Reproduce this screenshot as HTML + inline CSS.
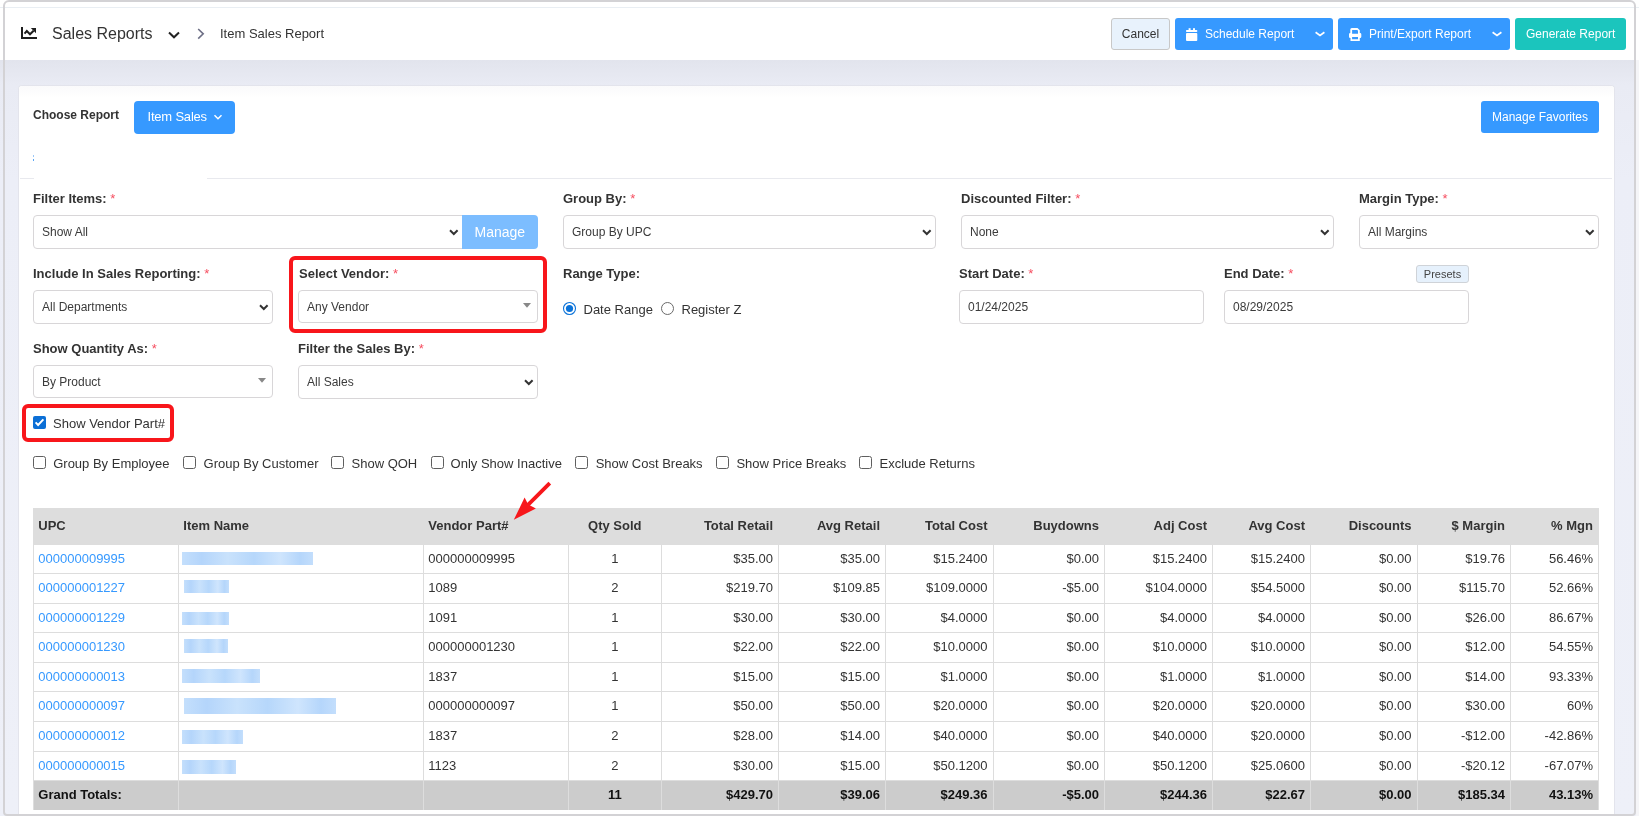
<!DOCTYPE html><html><head><meta charset="utf-8"><title>Item Sales Report</title><style>
*{margin:0;padding:0;box-sizing:border-box}
html,body{width:1639px;height:816px;overflow:hidden;background:#fff;font-family:"Liberation Sans",sans-serif;}
.t{position:absolute;white-space:nowrap;line-height:1;}
svg{position:absolute;overflow:visible}
</style></head><body><div id="root" style="position:absolute;left:0;top:0;width:1639px;height:816px;overflow:hidden;will-change:transform">
<div style="position:absolute;left:0px;top:60px;width:1639px;height:756px;background:linear-gradient(#e2e4ed 0px,#e9ebf4 25px,#eceef7 120px,#eef0f8 100%);"></div>
<div style="position:absolute;left:0px;top:0px;width:1639px;height:60px;background:#fff;"></div>
<div style="position:absolute;left:0px;top:7px;width:1639px;height:1px;background:#e9eef3;"></div>
<svg style="left:21px;top:27px" width="16" height="12" viewBox="0 0 16 12"><path d="M1 0V11H16" fill="none" stroke="#1e1e1e" stroke-width="2"/><path d="M3.5 6.6L5.8 4 9 7.3 12.6 3.7" fill="none" stroke="#1e1e1e" stroke-width="2"/><path d="M9.8 1.1H15V6.3Z" fill="#1e1e1e"/></svg>
<div class="t" style="left:52px;top:26px;font-size:16px;color:#333;">Sales Reports</div>
<svg style="left:168px;top:31px" width="12" height="8" viewBox="0 0 12 8"><path d="M1 1.5L6 6.3 11 1.5" fill="none" stroke="#222" stroke-width="2"/></svg>
<svg style="left:197px;top:28px" width="8" height="12" viewBox="0 0 8 12"><path d="M1.2 1L6.2 5.8 1.2 10.6" fill="none" stroke="#6e7086" stroke-width="1.6"/></svg>
<div class="t" style="left:220px;top:27px;font-size:13px;color:#333;">Item Sales Report</div>
<div style="position:absolute;left:1111px;top:18px;width:59px;height:32px;background:#e8f2fc;border:1px solid #c8c8c8;border-radius:3px;"></div>
<div class="t" style="left:940.5px;width:400px;top:28px;font-size:12px;color:#333;text-align:center;">Cancel</div>
<div style="position:absolute;left:1175px;top:18px;width:158px;height:32px;background:#3699ff;border-radius:3px;"></div>
<svg style="left:1186px;top:27px" width="12" height="14" viewBox="0 0 12 14"><rect x="2.6" y="1.2" width="2" height="2.5" fill="#fff"/><rect x="7" y="1.2" width="2" height="2.5" fill="#fff"/><rect x="0" y="3" width="11.3" height="2" rx="0.8" fill="#fff"/><rect x="0" y="6" width="11.3" height="8" rx="1" fill="#fff"/></svg>
<div class="t" style="left:1205px;top:28px;font-size:12px;color:#fff;">Schedule Report</div>
<svg style="left:1315px;top:30px" width="10" height="7" viewBox="0 0 10 7"><path d="M0.6 2.3L5 5.4 9.4 2.3" fill="none" stroke="#fff" stroke-width="1.7"/></svg>
<div style="position:absolute;left:1338px;top:18px;width:172px;height:32px;background:#3699ff;border-radius:3px;"></div>
<svg style="left:1349px;top:28px" width="13" height="13" viewBox="0 0 13 13"><path fill-rule="evenodd" fill="#fff" d="M1.3 5V1.5Q1.3 0 2.8 0H8.5L10.8 2.3V5H11.1Q12.3 5 12.3 6.2V8.8Q12.3 10 11.1 10H10.8V13H1.5V10H1.2Q0 10 0 8.8V6.2Q0 5 1.2 5ZM3.1 2H8.2L9 2.8V5.8H3.1ZM3.1 9H9V11.3H3.1Z"/></svg>
<div class="t" style="left:1369px;top:28px;font-size:12px;color:#fff;">Print/Export Report</div>
<svg style="left:1492px;top:30px" width="10" height="7" viewBox="0 0 10 7"><path d="M0.6 2.3L5 5.4 9.4 2.3" fill="none" stroke="#fff" stroke-width="1.7"/></svg>
<div style="position:absolute;left:1515px;top:18px;width:111px;height:32px;background:#1bc5bd;border-radius:3px;"></div>
<div class="t" style="left:1526px;top:28px;font-size:12px;color:#fff;">Generate Report</div>
<div style="position:absolute;left:18px;top:85px;width:1597px;height:740px;background:#fff;border:1px solid #e3e4ec;border-bottom:0;border-radius:4px 4px 0 0;"></div>
<div style="position:absolute;left:19px;top:86px;width:1595px;height:12px;background:linear-gradient(#fafafb,#fff);border-radius:3px 3px 0 0;"></div>
<div class="t" style="left:33px;top:109px;font-size:12px;font-weight:bold;color:#333;">Choose Report</div>
<div style="position:absolute;left:134px;top:101px;width:101px;height:33px;background:#3699ff;border-radius:4px;"></div>
<div class="t" style="left:147.5px;top:110px;font-size:13px;color:#fff;letter-spacing:-0.2px;">Item Sales</div>
<svg style="left:213px;top:114px" width="10" height="7" viewBox="0 0 10 7"><path d="M1.5 1.3L5 4.8 8.5 1.3" fill="none" stroke="#fff" stroke-width="1.5"/></svg>
<div style="position:absolute;left:1481px;top:101px;width:118px;height:32px;background:#3699ff;border-radius:3px;"></div>
<div class="t" style="left:1492px;top:111px;font-size:12px;color:#fff;">Manage Favorites</div>
<div style="position:absolute;left:20px;top:178px;width:14px;height:1px;background:#e8e9ee;"></div>
<div style="position:absolute;left:207px;top:178px;width:1405px;height:1px;background:#e8e9ee;"></div>
<div style="position:absolute;left:33px;top:155px;width:1px;height:2px;background:#9cc8f7;"></div>
<div style="position:absolute;left:33px;top:159px;width:1px;height:2px;background:#5aa6f5;"></div>
<div class="t" style="left:33px;top:192px;font-size:13px;font-weight:bold;color:#333;">Filter Items: <span style="color:#f64e60;font-weight:normal">*</span></div>
<div style="position:absolute;left:33px;top:215px;width:430px;height:34px;background:#fff;border:1px solid #d8d6d8;border-radius:4px 0 0 4px;"></div>
<div class="t" style="left:42px;top:226px;font-size:12px;color:#3b3b3b;">Show All</div>
<svg style="left:449px;top:229px" width="10" height="7" viewBox="0 0 10 7"><path d="M1 1.2L4.8 5 8.6 1.2" fill="none" stroke="#333" stroke-width="2"/></svg>
<div style="position:absolute;left:462px;top:215px;width:76px;height:34px;background:#7cbdff;border-radius:0 4px 4px 0;"></div>
<div class="t" style="left:474.5px;top:225px;font-size:14px;color:#fff;">Manage</div>
<div class="t" style="left:563px;top:192px;font-size:13px;font-weight:bold;color:#333;">Group By: <span style="color:#f64e60;font-weight:normal">*</span></div>
<div style="position:absolute;left:563px;top:215px;width:373px;height:34px;background:#fff;border:1px solid #d8d6d8;border-radius:4px;"></div>
<div class="t" style="left:572px;top:226px;font-size:12px;color:#3b3b3b;">Group By UPC</div>
<svg style="left:922px;top:229px" width="10" height="7" viewBox="0 0 10 7"><path d="M1 1.2L4.8 5 8.6 1.2" fill="none" stroke="#333" stroke-width="2"/></svg>
<div class="t" style="left:961px;top:192px;font-size:13px;font-weight:bold;color:#333;">Discounted Filter: <span style="color:#f64e60;font-weight:normal">*</span></div>
<div style="position:absolute;left:961px;top:215px;width:373px;height:34px;background:#fff;border:1px solid #d8d6d8;border-radius:4px;"></div>
<div class="t" style="left:970px;top:226px;font-size:12px;color:#3b3b3b;">None</div>
<svg style="left:1320px;top:229px" width="10" height="7" viewBox="0 0 10 7"><path d="M1 1.2L4.8 5 8.6 1.2" fill="none" stroke="#333" stroke-width="2"/></svg>
<div class="t" style="left:1359px;top:192px;font-size:13px;font-weight:bold;color:#333;">Margin Type: <span style="color:#f64e60;font-weight:normal">*</span></div>
<div style="position:absolute;left:1359px;top:215px;width:240px;height:34px;background:#fff;border:1px solid #d8d6d8;border-radius:4px;"></div>
<div class="t" style="left:1368px;top:226px;font-size:12px;color:#3b3b3b;">All Margins</div>
<svg style="left:1585px;top:229px" width="10" height="7" viewBox="0 0 10 7"><path d="M1 1.2L4.8 5 8.6 1.2" fill="none" stroke="#333" stroke-width="2"/></svg>
<div class="t" style="left:33px;top:267px;font-size:13px;font-weight:bold;color:#333;">Include In Sales Reporting: <span style="color:#f64e60;font-weight:normal">*</span></div>
<div style="position:absolute;left:33px;top:290px;width:240px;height:34px;background:#fff;border:1px solid #d8d6d8;border-radius:4px;"></div>
<div class="t" style="left:42px;top:301px;font-size:12px;color:#3b3b3b;">All Departments</div>
<svg style="left:259px;top:304px" width="10" height="7" viewBox="0 0 10 7"><path d="M1 1.2L4.8 5 8.6 1.2" fill="none" stroke="#333" stroke-width="2"/></svg>
<div class="t" style="left:299px;top:267px;font-size:13px;font-weight:bold;color:#333;">Select Vendor: <span style="color:#f64e60;font-weight:normal">*</span></div>
<div style="position:absolute;left:298px;top:290px;width:240px;height:33px;background:#fff;border:1px solid #d8d6d8;border-radius:4px;"></div>
<div class="t" style="left:307px;top:301px;font-size:12px;color:#3b3b3b;">Any Vendor</div>
<svg style="left:523px;top:302.5px" width="8" height="5" viewBox="0 0 8 5"><path d="M0 0H8L4 4.7Z" fill="#888"/></svg>
<div style="position:absolute;left:289px;top:256px;width:258px;height:77px;border:4px solid #f8161b;border-radius:6px;"></div>
<div class="t" style="left:563px;top:267px;font-size:13px;font-weight:bold;color:#333;">Range Type:</div>
<svg style="left:563px;top:302px" width="14" height="14" viewBox="0 0 14 14"><circle cx="6.5" cy="6.5" r="6" fill="#fff" stroke="#0b73d9" stroke-width="1.1"/><circle cx="6.5" cy="6.5" r="3.6" fill="#0b73d9"/></svg>
<div class="t" style="left:583.5px;top:303px;font-size:13px;color:#333;">Date Range</div>
<svg style="left:660.5px;top:302px" width="14" height="14" viewBox="0 0 14 14"><circle cx="6.5" cy="6.5" r="6" fill="#fff" stroke="#6a6a6a" stroke-width="1"/></svg>
<div class="t" style="left:681.5px;top:303px;font-size:13px;color:#333;">Register Z</div>
<div class="t" style="left:959px;top:267px;font-size:13px;font-weight:bold;color:#333;">Start Date: <span style="color:#f64e60;font-weight:normal">*</span></div>
<div style="position:absolute;left:959px;top:290px;width:245px;height:34px;background:#fff;border:1px solid #d8d6d8;border-radius:4px;"></div>
<div class="t" style="left:968px;top:301px;font-size:12px;color:#3b3b3b;">01/24/2025</div>
<div class="t" style="left:1224px;top:267px;font-size:13px;font-weight:bold;color:#333;">End Date: <span style="color:#f64e60;font-weight:normal">*</span></div>
<div style="position:absolute;left:1224px;top:290px;width:245px;height:34px;background:#fff;border:1px solid #d8d6d8;border-radius:4px;"></div>
<div class="t" style="left:1233px;top:301px;font-size:12px;color:#3b3b3b;">08/29/2025</div>
<div style="position:absolute;left:1416px;top:265px;width:53px;height:18px;background:#e6f1fc;border:1px solid #cfd3d8;border-radius:3px;"></div>
<div class="t" style="left:1242.5px;width:400px;top:269px;font-size:11px;color:#444;text-align:center;">Presets</div>
<div class="t" style="left:33px;top:342px;font-size:13px;font-weight:bold;color:#333;">Show Quantity As: <span style="color:#f64e60;font-weight:normal">*</span></div>
<div style="position:absolute;left:33px;top:365px;width:240px;height:33px;background:#fff;border:1px solid #d8d6d8;border-radius:4px;"></div>
<div class="t" style="left:42px;top:376px;font-size:12px;color:#3b3b3b;">By Product</div>
<svg style="left:258px;top:377.5px" width="8" height="5" viewBox="0 0 8 5"><path d="M0 0H8L4 4.7Z" fill="#888"/></svg>
<div class="t" style="left:298px;top:342px;font-size:13px;font-weight:bold;color:#333;">Filter the Sales By: <span style="color:#f64e60;font-weight:normal">*</span></div>
<div style="position:absolute;left:298px;top:365px;width:240px;height:34px;background:#fff;border:1px solid #d8d6d8;border-radius:4px;"></div>
<div class="t" style="left:307px;top:376px;font-size:12px;color:#3b3b3b;">All Sales</div>
<svg style="left:524px;top:379px" width="10" height="7" viewBox="0 0 10 7"><path d="M1 1.2L4.8 5 8.6 1.2" fill="none" stroke="#333" stroke-width="2"/></svg>
<div style="position:absolute;left:22px;top:404px;width:152px;height:38px;border:4px solid #f8161b;border-radius:6px;"></div>
<svg style="left:33px;top:416px" width="13" height="13" viewBox="0 0 13 13"><rect x="0" y="0" width="13" height="13" rx="2" fill="#0b6fd6"/><path d="M2.6 6.4L5.1 9 10.4 3.3" fill="none" stroke="#fff" stroke-width="1.9"/></svg>
<div class="t" style="left:53px;top:417px;font-size:13px;color:#333;">Show Vendor Part#</div>
<svg style="left:33px;top:456px" width="13" height="13" viewBox="0 0 13 13"><rect x="0.5" y="0.5" width="12" height="12" rx="2" fill="#fff" stroke="#5f5f5f" stroke-width="1"/></svg>
<div class="t" style="left:53.2px;top:457px;font-size:13px;color:#333;">Group By Employee</div>
<svg style="left:183px;top:456px" width="13" height="13" viewBox="0 0 13 13"><rect x="0.5" y="0.5" width="12" height="12" rx="2" fill="#fff" stroke="#5f5f5f" stroke-width="1"/></svg>
<div class="t" style="left:203.6px;top:457px;font-size:13px;color:#333;">Group By Customer</div>
<svg style="left:331px;top:456px" width="13" height="13" viewBox="0 0 13 13"><rect x="0.5" y="0.5" width="12" height="12" rx="2" fill="#fff" stroke="#5f5f5f" stroke-width="1"/></svg>
<div class="t" style="left:351.5px;top:457px;font-size:13px;color:#333;">Show QOH</div>
<svg style="left:431px;top:456px" width="13" height="13" viewBox="0 0 13 13"><rect x="0.5" y="0.5" width="12" height="12" rx="2" fill="#fff" stroke="#5f5f5f" stroke-width="1"/></svg>
<div class="t" style="left:450.6px;top:457px;font-size:13px;color:#333;">Only Show Inactive</div>
<svg style="left:575px;top:456px" width="13" height="13" viewBox="0 0 13 13"><rect x="0.5" y="0.5" width="12" height="12" rx="2" fill="#fff" stroke="#5f5f5f" stroke-width="1"/></svg>
<div class="t" style="left:595.7px;top:457px;font-size:13px;color:#333;">Show Cost Breaks</div>
<svg style="left:716px;top:456px" width="13" height="13" viewBox="0 0 13 13"><rect x="0.5" y="0.5" width="12" height="12" rx="2" fill="#fff" stroke="#5f5f5f" stroke-width="1"/></svg>
<div class="t" style="left:736.4px;top:457px;font-size:13px;color:#333;">Show Price Breaks</div>
<svg style="left:859px;top:456px" width="13" height="13" viewBox="0 0 13 13"><rect x="0.5" y="0.5" width="12" height="12" rx="2" fill="#fff" stroke="#5f5f5f" stroke-width="1"/></svg>
<div class="t" style="left:879.5px;top:457px;font-size:13px;color:#333;">Exclude Returns</div>
<svg style="left:500px;top:475px;z-index:5" width="60" height="50" viewBox="0 0 60 50"><path d="M49.8 8.2L27 30.8" stroke="#f7171b" stroke-width="3.8" fill="none"/><path d="M13.8 44.8L24.6 22.6 28.2 29.6 35.9 33.4Z" fill="#f7171b"/></svg>
<div style="position:absolute;left:33px;top:508px;width:1566px;height:37px;background:#dddddd;"></div>
<div class="t" style="left:38.3px;top:519px;font-size:13px;font-weight:bold;color:#333;">UPC</div>
<div class="t" style="left:183.3px;top:519px;font-size:13px;font-weight:bold;color:#333;">Item Name</div>
<div class="t" style="left:428.3px;top:519px;font-size:13px;font-weight:bold;color:#333;">Vendor Part#</div>
<div class="t" style="left:414.75px;width:400px;top:519px;font-size:13px;font-weight:bold;color:#333;text-align:center;">Qty Sold</div>
<div class="t" style="right:866.0px;top:519px;font-size:13px;font-weight:bold;color:#333;text-align:right;">Total Retail</div>
<div class="t" style="right:759.0px;top:519px;font-size:13px;font-weight:bold;color:#333;text-align:right;">Avg Retail</div>
<div class="t" style="right:651.5px;top:519px;font-size:13px;font-weight:bold;color:#333;text-align:right;">Total Cost</div>
<div class="t" style="right:540.0px;top:519px;font-size:13px;font-weight:bold;color:#333;text-align:right;">Buydowns</div>
<div class="t" style="right:432.0px;top:519px;font-size:13px;font-weight:bold;color:#333;text-align:right;">Adj Cost</div>
<div class="t" style="right:334.0px;top:519px;font-size:13px;font-weight:bold;color:#333;text-align:right;">Avg Cost</div>
<div class="t" style="right:227.5px;top:519px;font-size:13px;font-weight:bold;color:#333;text-align:right;">Discounts</div>
<div class="t" style="right:134.0px;top:519px;font-size:13px;font-weight:bold;color:#333;text-align:right;">$ Margin</div>
<div class="t" style="right:46.0px;top:519px;font-size:13px;font-weight:bold;color:#333;text-align:right;">% Mgn</div>
<div style="position:absolute;left:33px;top:780px;width:1566px;height:30px;background:#cccccc;"></div>
<div style="position:absolute;left:33px;top:573px;width:1566px;height:1px;background:#dddddd;"></div>
<div style="position:absolute;left:33px;top:603px;width:1566px;height:1px;background:#dddddd;"></div>
<div style="position:absolute;left:33px;top:632px;width:1566px;height:1px;background:#dddddd;"></div>
<div style="position:absolute;left:33px;top:662px;width:1566px;height:1px;background:#dddddd;"></div>
<div style="position:absolute;left:33px;top:691px;width:1566px;height:1px;background:#dddddd;"></div>
<div style="position:absolute;left:33px;top:721px;width:1566px;height:1px;background:#dddddd;"></div>
<div style="position:absolute;left:33px;top:751px;width:1566px;height:1px;background:#dddddd;"></div>
<div style="position:absolute;left:33px;top:780px;width:1566px;height:1px;background:#dddddd;"></div>
<div style="position:absolute;left:178px;top:545px;width:1px;height:265px;background:#dddddd;"></div>
<div style="position:absolute;left:423px;top:545px;width:1px;height:265px;background:#dddddd;"></div>
<div style="position:absolute;left:568px;top:545px;width:1px;height:265px;background:#dddddd;"></div>
<div style="position:absolute;left:661px;top:545px;width:1px;height:265px;background:#dddddd;"></div>
<div style="position:absolute;left:778px;top:545px;width:1px;height:265px;background:#dddddd;"></div>
<div style="position:absolute;left:885px;top:545px;width:1px;height:265px;background:#dddddd;"></div>
<div style="position:absolute;left:993px;top:545px;width:1px;height:265px;background:#dddddd;"></div>
<div style="position:absolute;left:1104px;top:545px;width:1px;height:265px;background:#dddddd;"></div>
<div style="position:absolute;left:1212px;top:545px;width:1px;height:265px;background:#dddddd;"></div>
<div style="position:absolute;left:1310px;top:545px;width:1px;height:265px;background:#dddddd;"></div>
<div style="position:absolute;left:1417px;top:545px;width:1px;height:265px;background:#dddddd;"></div>
<div style="position:absolute;left:1510px;top:545px;width:1px;height:265px;background:#dddddd;"></div>
<div style="position:absolute;left:33px;top:545px;width:1px;height:265px;background:#dddddd;"></div>
<div style="position:absolute;left:1598px;top:545px;width:1px;height:265px;background:#dddddd;"></div>
<div class="t" style="left:38.3px;top:552px;font-size:13px;color:#3699ff;">000000009995</div>
<div style="position:absolute;left:182px;top:552px;width:131px;height:13px;background:linear-gradient(90deg,#c4dffc,#b4d5fb 15%,#c9e2fc 35%,#b6d7fb 55%,#cfe5fd 75%,#b5d6fb 90%,#c3defc);filter:blur(0.5px);"></div>
<div class="t" style="left:428.3px;top:552px;font-size:13px;color:#333;">000000009995</div>
<div class="t" style="left:414.75px;width:400px;top:552px;font-size:13px;color:#333;text-align:center;">1</div>
<div class="t" style="right:866.0px;top:552px;font-size:13px;color:#333;text-align:right;">$35.00</div>
<div class="t" style="right:759.0px;top:552px;font-size:13px;color:#333;text-align:right;">$35.00</div>
<div class="t" style="right:651.5px;top:552px;font-size:13px;color:#333;text-align:right;">$15.2400</div>
<div class="t" style="right:540.0px;top:552px;font-size:13px;color:#333;text-align:right;">$0.00</div>
<div class="t" style="right:432.0px;top:552px;font-size:13px;color:#333;text-align:right;">$15.2400</div>
<div class="t" style="right:334.0px;top:552px;font-size:13px;color:#333;text-align:right;">$15.2400</div>
<div class="t" style="right:227.5px;top:552px;font-size:13px;color:#333;text-align:right;">$0.00</div>
<div class="t" style="right:134.0px;top:552px;font-size:13px;color:#333;text-align:right;">$19.76</div>
<div class="t" style="right:46.0px;top:552px;font-size:13px;color:#333;text-align:right;">56.46%</div>
<div class="t" style="left:38.3px;top:581px;font-size:13px;color:#3699ff;">000000001227</div>
<div style="position:absolute;left:184px;top:580px;width:45px;height:13px;background:linear-gradient(90deg,#c4dffc,#b4d5fb 15%,#c9e2fc 35%,#b6d7fb 55%,#cfe5fd 75%,#b5d6fb 90%,#c3defc);filter:blur(0.5px);"></div>
<div class="t" style="left:428.3px;top:581px;font-size:13px;color:#333;">1089</div>
<div class="t" style="left:414.75px;width:400px;top:581px;font-size:13px;color:#333;text-align:center;">2</div>
<div class="t" style="right:866.0px;top:581px;font-size:13px;color:#333;text-align:right;">$219.70</div>
<div class="t" style="right:759.0px;top:581px;font-size:13px;color:#333;text-align:right;">$109.85</div>
<div class="t" style="right:651.5px;top:581px;font-size:13px;color:#333;text-align:right;">$109.0000</div>
<div class="t" style="right:540.0px;top:581px;font-size:13px;color:#333;text-align:right;">-$5.00</div>
<div class="t" style="right:432.0px;top:581px;font-size:13px;color:#333;text-align:right;">$104.0000</div>
<div class="t" style="right:334.0px;top:581px;font-size:13px;color:#333;text-align:right;">$54.5000</div>
<div class="t" style="right:227.5px;top:581px;font-size:13px;color:#333;text-align:right;">$0.00</div>
<div class="t" style="right:134.0px;top:581px;font-size:13px;color:#333;text-align:right;">$115.70</div>
<div class="t" style="right:46.0px;top:581px;font-size:13px;color:#333;text-align:right;">52.66%</div>
<div class="t" style="left:38.3px;top:611px;font-size:13px;color:#3699ff;">000000001229</div>
<div style="position:absolute;left:182px;top:612px;width:47px;height:13px;background:linear-gradient(90deg,#c4dffc,#b4d5fb 15%,#c9e2fc 35%,#b6d7fb 55%,#cfe5fd 75%,#b5d6fb 90%,#c3defc);filter:blur(0.5px);"></div>
<div class="t" style="left:428.3px;top:611px;font-size:13px;color:#333;">1091</div>
<div class="t" style="left:414.75px;width:400px;top:611px;font-size:13px;color:#333;text-align:center;">1</div>
<div class="t" style="right:866.0px;top:611px;font-size:13px;color:#333;text-align:right;">$30.00</div>
<div class="t" style="right:759.0px;top:611px;font-size:13px;color:#333;text-align:right;">$30.00</div>
<div class="t" style="right:651.5px;top:611px;font-size:13px;color:#333;text-align:right;">$4.0000</div>
<div class="t" style="right:540.0px;top:611px;font-size:13px;color:#333;text-align:right;">$0.00</div>
<div class="t" style="right:432.0px;top:611px;font-size:13px;color:#333;text-align:right;">$4.0000</div>
<div class="t" style="right:334.0px;top:611px;font-size:13px;color:#333;text-align:right;">$4.0000</div>
<div class="t" style="right:227.5px;top:611px;font-size:13px;color:#333;text-align:right;">$0.00</div>
<div class="t" style="right:134.0px;top:611px;font-size:13px;color:#333;text-align:right;">$26.00</div>
<div class="t" style="right:46.0px;top:611px;font-size:13px;color:#333;text-align:right;">86.67%</div>
<div class="t" style="left:38.3px;top:640px;font-size:13px;color:#3699ff;">000000001230</div>
<div style="position:absolute;left:184px;top:639px;width:44px;height:14px;background:linear-gradient(90deg,#c4dffc,#b4d5fb 15%,#c9e2fc 35%,#b6d7fb 55%,#cfe5fd 75%,#b5d6fb 90%,#c3defc);filter:blur(0.5px);"></div>
<div class="t" style="left:428.3px;top:640px;font-size:13px;color:#333;">000000001230</div>
<div class="t" style="left:414.75px;width:400px;top:640px;font-size:13px;color:#333;text-align:center;">1</div>
<div class="t" style="right:866.0px;top:640px;font-size:13px;color:#333;text-align:right;">$22.00</div>
<div class="t" style="right:759.0px;top:640px;font-size:13px;color:#333;text-align:right;">$22.00</div>
<div class="t" style="right:651.5px;top:640px;font-size:13px;color:#333;text-align:right;">$10.0000</div>
<div class="t" style="right:540.0px;top:640px;font-size:13px;color:#333;text-align:right;">$0.00</div>
<div class="t" style="right:432.0px;top:640px;font-size:13px;color:#333;text-align:right;">$10.0000</div>
<div class="t" style="right:334.0px;top:640px;font-size:13px;color:#333;text-align:right;">$10.0000</div>
<div class="t" style="right:227.5px;top:640px;font-size:13px;color:#333;text-align:right;">$0.00</div>
<div class="t" style="right:134.0px;top:640px;font-size:13px;color:#333;text-align:right;">$12.00</div>
<div class="t" style="right:46.0px;top:640px;font-size:13px;color:#333;text-align:right;">54.55%</div>
<div class="t" style="left:38.3px;top:670px;font-size:13px;color:#3699ff;">000000000013</div>
<div style="position:absolute;left:182px;top:669px;width:78px;height:14px;background:linear-gradient(90deg,#c4dffc,#b4d5fb 15%,#c9e2fc 35%,#b6d7fb 55%,#cfe5fd 75%,#b5d6fb 90%,#c3defc);filter:blur(0.5px);"></div>
<div class="t" style="left:428.3px;top:670px;font-size:13px;color:#333;">1837</div>
<div class="t" style="left:414.75px;width:400px;top:670px;font-size:13px;color:#333;text-align:center;">1</div>
<div class="t" style="right:866.0px;top:670px;font-size:13px;color:#333;text-align:right;">$15.00</div>
<div class="t" style="right:759.0px;top:670px;font-size:13px;color:#333;text-align:right;">$15.00</div>
<div class="t" style="right:651.5px;top:670px;font-size:13px;color:#333;text-align:right;">$1.0000</div>
<div class="t" style="right:540.0px;top:670px;font-size:13px;color:#333;text-align:right;">$0.00</div>
<div class="t" style="right:432.0px;top:670px;font-size:13px;color:#333;text-align:right;">$1.0000</div>
<div class="t" style="right:334.0px;top:670px;font-size:13px;color:#333;text-align:right;">$1.0000</div>
<div class="t" style="right:227.5px;top:670px;font-size:13px;color:#333;text-align:right;">$0.00</div>
<div class="t" style="right:134.0px;top:670px;font-size:13px;color:#333;text-align:right;">$14.00</div>
<div class="t" style="right:46.0px;top:670px;font-size:13px;color:#333;text-align:right;">93.33%</div>
<div class="t" style="left:38.3px;top:699px;font-size:13px;color:#3699ff;">000000000097</div>
<div style="position:absolute;left:184px;top:698px;width:152px;height:16px;background:linear-gradient(90deg,#c4dffc,#b4d5fb 15%,#c9e2fc 35%,#b6d7fb 55%,#cfe5fd 75%,#b5d6fb 90%,#c3defc);filter:blur(0.5px);"></div>
<div class="t" style="left:428.3px;top:699px;font-size:13px;color:#333;">000000000097</div>
<div class="t" style="left:414.75px;width:400px;top:699px;font-size:13px;color:#333;text-align:center;">1</div>
<div class="t" style="right:866.0px;top:699px;font-size:13px;color:#333;text-align:right;">$50.00</div>
<div class="t" style="right:759.0px;top:699px;font-size:13px;color:#333;text-align:right;">$50.00</div>
<div class="t" style="right:651.5px;top:699px;font-size:13px;color:#333;text-align:right;">$20.0000</div>
<div class="t" style="right:540.0px;top:699px;font-size:13px;color:#333;text-align:right;">$0.00</div>
<div class="t" style="right:432.0px;top:699px;font-size:13px;color:#333;text-align:right;">$20.0000</div>
<div class="t" style="right:334.0px;top:699px;font-size:13px;color:#333;text-align:right;">$20.0000</div>
<div class="t" style="right:227.5px;top:699px;font-size:13px;color:#333;text-align:right;">$0.00</div>
<div class="t" style="right:134.0px;top:699px;font-size:13px;color:#333;text-align:right;">$30.00</div>
<div class="t" style="right:46.0px;top:699px;font-size:13px;color:#333;text-align:right;">60%</div>
<div class="t" style="left:38.3px;top:729px;font-size:13px;color:#3699ff;">000000000012</div>
<div style="position:absolute;left:182px;top:730px;width:61px;height:14px;background:linear-gradient(90deg,#c4dffc,#b4d5fb 15%,#c9e2fc 35%,#b6d7fb 55%,#cfe5fd 75%,#b5d6fb 90%,#c3defc);filter:blur(0.5px);"></div>
<div class="t" style="left:428.3px;top:729px;font-size:13px;color:#333;">1837</div>
<div class="t" style="left:414.75px;width:400px;top:729px;font-size:13px;color:#333;text-align:center;">2</div>
<div class="t" style="right:866.0px;top:729px;font-size:13px;color:#333;text-align:right;">$28.00</div>
<div class="t" style="right:759.0px;top:729px;font-size:13px;color:#333;text-align:right;">$14.00</div>
<div class="t" style="right:651.5px;top:729px;font-size:13px;color:#333;text-align:right;">$40.0000</div>
<div class="t" style="right:540.0px;top:729px;font-size:13px;color:#333;text-align:right;">$0.00</div>
<div class="t" style="right:432.0px;top:729px;font-size:13px;color:#333;text-align:right;">$40.0000</div>
<div class="t" style="right:334.0px;top:729px;font-size:13px;color:#333;text-align:right;">$20.0000</div>
<div class="t" style="right:227.5px;top:729px;font-size:13px;color:#333;text-align:right;">$0.00</div>
<div class="t" style="right:134.0px;top:729px;font-size:13px;color:#333;text-align:right;">-$12.00</div>
<div class="t" style="right:46.0px;top:729px;font-size:13px;color:#333;text-align:right;">-42.86%</div>
<div class="t" style="left:38.3px;top:759px;font-size:13px;color:#3699ff;">000000000015</div>
<div style="position:absolute;left:182px;top:760px;width:54px;height:14px;background:linear-gradient(90deg,#c4dffc,#b4d5fb 15%,#c9e2fc 35%,#b6d7fb 55%,#cfe5fd 75%,#b5d6fb 90%,#c3defc);filter:blur(0.5px);"></div>
<div class="t" style="left:428.3px;top:759px;font-size:13px;color:#333;">1123</div>
<div class="t" style="left:414.75px;width:400px;top:759px;font-size:13px;color:#333;text-align:center;">2</div>
<div class="t" style="right:866.0px;top:759px;font-size:13px;color:#333;text-align:right;">$30.00</div>
<div class="t" style="right:759.0px;top:759px;font-size:13px;color:#333;text-align:right;">$15.00</div>
<div class="t" style="right:651.5px;top:759px;font-size:13px;color:#333;text-align:right;">$50.1200</div>
<div class="t" style="right:540.0px;top:759px;font-size:13px;color:#333;text-align:right;">$0.00</div>
<div class="t" style="right:432.0px;top:759px;font-size:13px;color:#333;text-align:right;">$50.1200</div>
<div class="t" style="right:334.0px;top:759px;font-size:13px;color:#333;text-align:right;">$25.0600</div>
<div class="t" style="right:227.5px;top:759px;font-size:13px;color:#333;text-align:right;">$0.00</div>
<div class="t" style="right:134.0px;top:759px;font-size:13px;color:#333;text-align:right;">-$20.12</div>
<div class="t" style="right:46.0px;top:759px;font-size:13px;color:#333;text-align:right;">-67.07%</div>
<div class="t" style="left:38.3px;top:788px;font-size:13px;font-weight:bold;color:#111;">Grand Totals:</div>
<div class="t" style="left:414.75px;width:400px;top:788px;font-size:13px;font-weight:bold;color:#111;text-align:center;">11</div>
<div class="t" style="right:866.0px;top:788px;font-size:13px;font-weight:bold;color:#111;text-align:right;">$429.70</div>
<div class="t" style="right:759.0px;top:788px;font-size:13px;font-weight:bold;color:#111;text-align:right;">$39.06</div>
<div class="t" style="right:651.5px;top:788px;font-size:13px;font-weight:bold;color:#111;text-align:right;">$249.36</div>
<div class="t" style="right:540.0px;top:788px;font-size:13px;font-weight:bold;color:#111;text-align:right;">-$5.00</div>
<div class="t" style="right:432.0px;top:788px;font-size:13px;font-weight:bold;color:#111;text-align:right;">$244.36</div>
<div class="t" style="right:334.0px;top:788px;font-size:13px;font-weight:bold;color:#111;text-align:right;">$22.67</div>
<div class="t" style="right:227.5px;top:788px;font-size:13px;font-weight:bold;color:#111;text-align:right;">$0.00</div>
<div class="t" style="right:134.0px;top:788px;font-size:13px;font-weight:bold;color:#111;text-align:right;">$185.34</div>
<div class="t" style="right:46.0px;top:788px;font-size:13px;font-weight:bold;color:#111;text-align:right;">43.13%</div>
<div style="position:absolute;left:1636px;top:60px;width:3px;height:756px;background:#f5f5f8;"></div>
<div style="position:absolute;left:3px;top:0;width:1633px;height:816px;border:2px solid #d3d2d5;border-radius:6px 6px 4px 4px;"></div>
</div></body></html>
